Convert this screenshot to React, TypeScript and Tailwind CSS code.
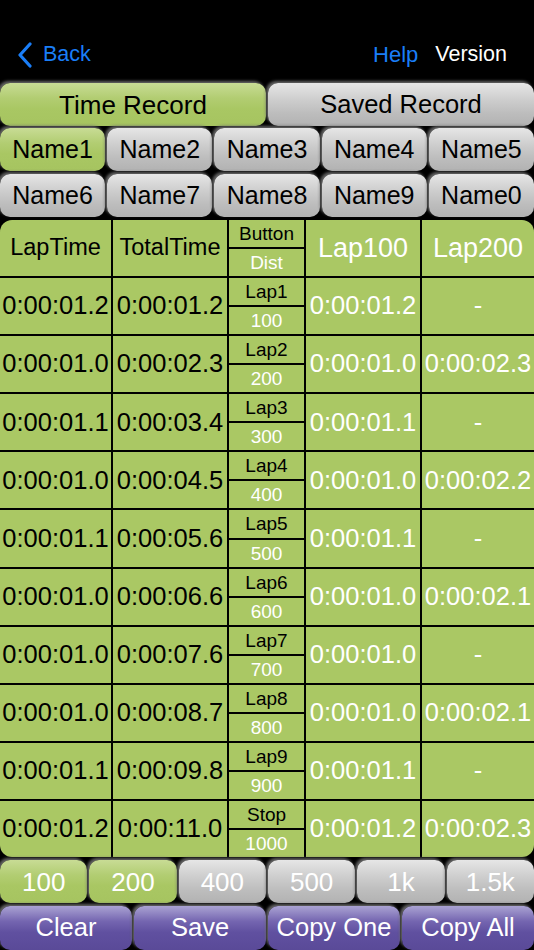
import React from "react";

const rows: [string, string, string, string, string, string][] = [
  ["0:00:01.2", "0:00:01.2", "Lap1", "100", "0:00:01.2", "-"],
  ["0:00:01.0", "0:00:02.3", "Lap2", "200", "0:00:01.0", "0:00:02.3"],
  ["0:00:01.1", "0:00:03.4", "Lap3", "300", "0:00:01.1", "-"],
  ["0:00:01.0", "0:00:04.5", "Lap4", "400", "0:00:01.0", "0:00:02.2"],
  ["0:00:01.1", "0:00:05.6", "Lap5", "500", "0:00:01.1", "-"],
  ["0:00:01.0", "0:00:06.6", "Lap6", "600", "0:00:01.0", "0:00:02.1"],
  ["0:00:01.0", "0:00:07.6", "Lap7", "700", "0:00:01.0", "-"],
  ["0:00:01.0", "0:00:08.7", "Lap8", "800", "0:00:01.0", "0:00:02.1"],
  ["0:00:01.1", "0:00:09.8", "Lap9", "900", "0:00:01.1", "-"],
  ["0:00:01.2", "0:00:11.0", "Stop", "1000", "0:00:01.2", "0:00:02.3"],
];

const green =
  "bg-[linear-gradient(to_bottom,#c8dc95_0%,#b2cd72_35%,#a9c763_60%,#a6c460_100%)]";
const gray =
  "bg-[linear-gradient(to_bottom,#e6e6e6_0%,#cdcdcd_40%,#bdbdbd_70%,#b2b2b2_100%)]";
const purple =
  "bg-[linear-gradient(to_bottom,#aaa3d3_0%,#7465b0_35%,#6050a0_60%,#5a4a98_100%)]";
const shadow = "shadow-[-2px_-2px_3px_rgba(105,105,105,0.95)]";

function Btn({
  label,
  color,
  text,
  size,
}: {
  label: string;
  color: string;
  text: string;
  size: string;
}) {
  return (
    <div
      className={`flex-1 flex items-center justify-center rounded-[10px] ${color} ${shadow} ${text} ${size} leading-none`}
    >
      {label}
    </div>
  );
}

export default function App() {
  const cell = "bg-[#aac864] flex items-center justify-center leading-none whitespace-nowrap";
  return (
    <div className="w-[534px] h-[950px] bg-black flex flex-col overflow-hidden font-['Liberation_Sans',Arial,sans-serif]">
      {/* nav */}
      <div className="h-[83px] pt-[26px] flex items-center pl-[17px] pr-[27px]">
        <svg width="16" height="26" viewBox="0 0 16 26" className="mr-[10px]">
          <polyline
            points="13,2 3,13 13,24"
            fill="none"
            stroke="#1a7ef7"
            strokeWidth="3.2"
            strokeLinecap="round"
            strokeLinejoin="round"
          />
        </svg>
        <span className="text-[#1a7ef7] text-[21.5px]">Back</span>
        <span className="ml-auto text-[#1a7ef7] text-[22px]">Help</span>
        <span className="ml-[17px] text-white text-[21.5px]">Version</span>
      </div>

      {/* segment */}
      <div className="h-[43px] flex gap-[2px]">
        <Btn label="Time Record" color={green} text="text-black" size="text-[26px]" />
        <Btn label="Saved Record" color={gray} text="text-black" size="text-[25.5px]" />
      </div>

      {/* names */}
      <div className="h-[43px] mt-[2px] flex gap-[2px]">
        <Btn label="Name1" color={green} text="text-black" size="text-[25px]" />
        {["Name2", "Name3", "Name4", "Name5"].map((n) => (
          <Btn key={n} label={n} color={gray} text="text-black" size="text-[25px]" />
        ))}
      </div>
      <div className="h-[43px] mt-[3px] flex gap-[2px]">
        {["Name6", "Name7", "Name8", "Name9", "Name0"].map((n) => (
          <Btn key={n} label={n} color={gray} text="text-black" size="text-[25px]" />
        ))}
      </div>

      {/* table */}
      <div className="mt-[3px] h-[637px] grid grid-cols-[111px_114px_75px_114px_112px] grid-rows-[repeat(11,1fr)] gap-[2px] bg-black rounded-[12px] overflow-hidden">
        <div className={`${cell} text-black text-[23.5px]`}>LapTime</div>
        <div className={`${cell} text-black text-[23.5px]`}>TotalTime</div>
        <div className="flex flex-col gap-[2px]">
          <div className={`${cell} flex-1 text-black text-[19px]`}>Button</div>
          <div className={`${cell} flex-1 text-white text-[19px]`}>Dist</div>
        </div>
        <div className={`${cell} text-white text-[27px]`}>Lap100</div>
        <div className={`${cell} text-white text-[27px]`}>Lap200</div>
        {rows.map((r, i) => (
          <React.Fragment key={i}>
            <div className={`${cell} text-black text-[25.5px]`}>{r[0]}</div>
            <div className={`${cell} text-black text-[25.5px]`}>{r[1]}</div>
            <div className="flex flex-col gap-[2px]">
              <div className={`${cell} flex-1 text-black text-[19px]`}>{r[2]}</div>
              <div className={`${cell} flex-1 text-white text-[19px]`}>{r[3]}</div>
            </div>
            <div className={`${cell} text-white text-[25.5px]`}>{r[4]}</div>
            <div className={`${cell} text-white text-[25.5px]`}>{r[5]}</div>
          </React.Fragment>
        ))}
      </div>

      {/* distances */}
      <div className="h-[43px] mt-[3px] flex gap-[2px]">
        <Btn label="100" color={green} text="text-white" size="text-[26px]" />
        <Btn label="200" color={green} text="text-white" size="text-[26px]" />
        {["400", "500", "1k", "1.5k"].map((n) => (
          <Btn key={n} label={n} color={gray} text="text-white" size="text-[26px]" />
        ))}
      </div>

      {/* actions */}
      <div className="h-[44px] mt-[3px] flex gap-[2px]">
        {["Clear", "Save", "Copy One", "Copy All"].map((n) => (
          <Btn key={n} label={n} color={purple} text="text-white" size="text-[25.5px]" />
        ))}
      </div>
    </div>
  );
}
